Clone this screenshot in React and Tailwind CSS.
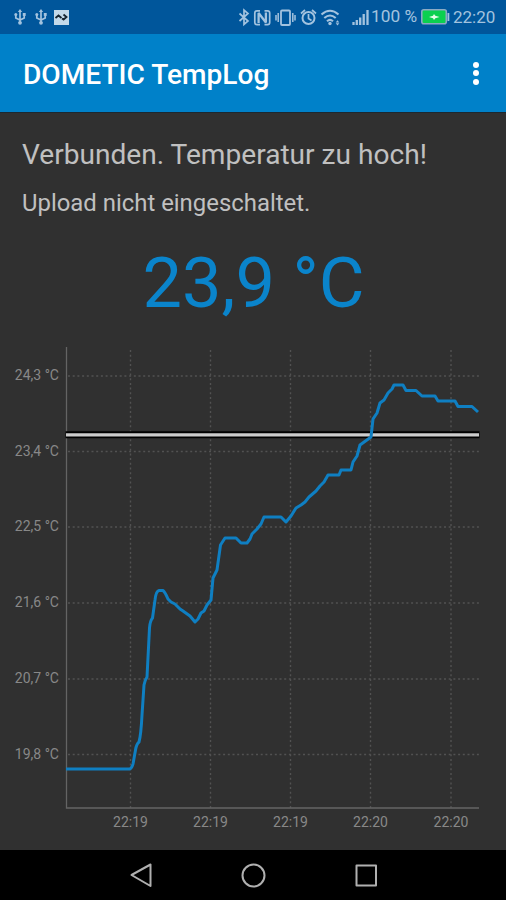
const Y_TICKS = [
  ["24,3 °C", 376], ["23,4 °C", 451.5], ["22,5 °C", 527], ["21,6 °C", 603], ["20,7 °C", 679], ["19,8 °C", 754.5],
];
const X_TICKS = [["22:19", 130.5], ["22:19", 210.5], ["22:19", 290.5], ["22:20", 370.5], ["22:20", 451]];

const CURVE =
  "M66 769H130Q132 768 133 764L135.5 750Q136.5 744 139 742Q141 735 142 715L144 685Q145 680 147 677L149.5 628Q150 621 152.5 618L155 600Q156 591 159 590.5H163Q165 592 168 599L171 602L175 604L180 609L183 611L190 616L195 622L198 619L201 613L204 611L207 605L211 600L213 578L217 570L220.500 545L225 538H236L241 543H247L250 539L252 534L257 529L261 524L264 517H281L286 522L291 516L296 508L301 505L305 502L309 497L316 491L320 486L324 482L328 475H339L341 470H351L353 462L357 456L360 445L371 437L373 419L377 413L380 403L384 400L388 393L392 389L394 385H403L406 390.500H416L422 396H435L438 401H455L458 406.500H472L478 412";

function Usb() {
  return (
    <svg className="h-4 w-3" viewBox="0 0 12 16" fill="none" stroke="#a3c3df" strokeWidth="1.700">
      <path d="M6 2v11M1.800 6v3L6 11l4.200-2V5.500" />
      <path d="M6 0L8.200 3H3.800Z" fill="#a3c3df" stroke="none" />
      <circle cx="6" cy="13.800" r="1.900" fill="#a3c3df" stroke="none" />
      <circle cx="1.800" cy="5.500" r="1.500" fill="#a3c3df" stroke="none" />
      <path d="M8.800 4h2.900v2.900H8.800Z" fill="#a3c3df" stroke="none" />
    </svg>
  );
}

function StatusIcons() {
  return (
    <svg className="h-[34px] w-[135px] shrink-0" viewBox="236 0 135 34" fill="none" stroke="#a3c3df" strokeWidth="1.500">
      <path d="M239.500 13.500L248 21L244 24.500V10L248 13.500L239.500 21" strokeWidth="1.700" />
      <path d="M260 10.800H257Q254.800 10.800 254.800 13V22.500Q254.800 24.700 257 24.700H260M264.500 10.800H267.500Q269.700 10.800 269.700 13V22.500Q269.700 24.700 267.500 24.700H264.500" strokeWidth="1.700" />
      <path d="M258.600 23V13L265.900 22.500V12.500" strokeWidth="2.300" strokeLinejoin="bevel" />
      <rect x="281" y="10.500" width="9" height="14.500" rx="1" strokeWidth="1.800" />
      <path d="M278.200 13v9M276 15v5.500M292.800 13v9M295 15v5.500" strokeWidth="1.500" />
      <circle cx="308.500" cy="18" r="6" strokeWidth="2" />
      <path d="M308.500 14v4.500l3 2M301 13.500L305 10M316 13.500L312 10" strokeWidth="1.700" />
      <path d="M321.500 14.500Q330 7 338.500 14.500M324.300 18Q330 13 335.700 18M327 21.300Q330 18.600 333 21.300" strokeWidth="2.100" />
      <circle cx="330" cy="23.500" r="1.700" fill="#a3c3df" stroke="none" />
      <path d="M335.700 22.500l1.800-2.200 1.800 2.200ZM335.700 23.300l1.800 2.200 1.800-2.200Z" fill="#a3c3df" stroke="none" />
      <path d="M353.500 22v3M356.800 20v5M360.200 17.500v7.500M363.700 14v11M367.500 10v15" strokeWidth="2.300" />
    </svg>
  );
}

function StatusBar() {
  return (
    <header className="flex h-[34px] items-center bg-[#00569b] text-[#a3c3df]">
      <div className="flex w-[236px] shrink-0 items-center pl-[14px]">
        <Usb />
        <span className="w-[9px]" />
        <Usb />
        <svg className="ml-[7px] h-[15px] w-[15px]" viewBox="0 0 15 15" fill="none">
          <rect width="15" height="15" fill="#c3d9e9" />
          <path d="M1.500 8L4.500 5.500L7.500 8M8 8.500L9.500 9.500M9.500 4.500L12.500 7L9 10" stroke="#16242e" strokeWidth="1.800" />
        </svg>
      </div>
      <StatusIcons />
      <span className="w-[50px] shrink-0 whitespace-nowrap text-[17.300px]">100 %</span>
      <svg className="h-[16px] w-[29px] shrink-0" viewBox="0 0 29 16">
        <rect x="0.800" y="0.800" width="24.500" height="14" rx="2" fill="#0bd04f" stroke="#8baac4" strokeWidth="1.600" />
        <rect x="26.500" y="4" width="1.800" height="8" fill="#a3c3df" />
        <path d="M8 8L12 6.800L13 5L14.300 6.800L18.500 8L14.300 9.200L13 11L12 9.200Z" fill="#e4ffe9" />
      </svg>
      <span className="ml-[3px] pt-[2px] text-[17px]">22:20</span>
    </header>
  );
}

function Chart() {
  return (
    <svg className="block h-[510px] w-full" viewBox="0 340 506 510" fill="none">
      <g stroke="#525252" strokeWidth="1.400" strokeDasharray="2 2.700">
        {Y_TICKS.map(([t, y]) => <path key={t} d={`M68 ${y}H479`} />)}
        {X_TICKS.map(([t, x]) => <path key={x} d={`M${x} 350V808`} />)}
      </g>
      <path d="M66.500 347V808H479" stroke="#646464" strokeWidth="1.300" />
      <path d="M65.500 434.800H479.500" stroke="#000" strokeWidth="7" />
      <path d="M66 434.800H479" stroke="#ccc" strokeWidth="3.200" />
      <path d={CURVE} stroke="#0f7fc2" strokeWidth="3" strokeLinejoin="round" />
      <g fill="#888" fontSize="14">
        {Y_TICKS.map(([t, y]) => <text key={t} x="59" y={y + 4.300} textAnchor="end">{t}</text>)}
        {X_TICKS.map(([t, x]) => <text key={x} x={x} y="826.500" textAnchor="middle">{t}</text>)}
      </g>
    </svg>
  );
}

function NavBar() {
  return (
    <nav className="flex h-[50px] items-center bg-black">
      <svg className="h-[50px] w-full" viewBox="0 850 506 50" fill="none" stroke="#b0b0b0" strokeWidth="2" strokeLinejoin="round">
        <path d="M131.500 875L150.500 864.500V886Z" />
        <circle cx="253.500" cy="875.500" r="11" />
        <rect x="356.500" y="865.500" width="19.500" height="20" />
      </svg>
    </nav>
  );
}

export default function App() {
  return (
    <div className="flex h-[900px] w-[506px] flex-col overflow-hidden bg-[#303030] font-[Roboto,sans-serif]">
      <StatusBar />
      <div className="flex h-[79px] items-center justify-between border-b border-[#1c2830] bg-[#0081c9] pl-[23px] pr-[27px]">
        <h1 className="pt-[5px] text-[28.100px] font-medium text-white">DOMETIC TempLog</h1>
        <div className="flex flex-col gap-[2.500px]">
          <i className="size-[6px] rounded-full bg-white" />
          <i className="size-[6px] rounded-full bg-white" />
          <i className="size-[6px] rounded-full bg-white" />
        </div>
      </div>
      <main className="h-[227px]">
        <p className="pl-[22px] pt-[22px] text-[28.100px] leading-[40px] text-[#c0c0c0]">Verbunden. Temperatur zu hoch!</p>
        <p className="pl-[22px] pt-[10px] text-[23.900px] leading-[36px] text-[#c0c0c0]">Upload nicht eingeschaltet.</p>
        <p className="pl-px pt-[22px] text-center text-[70.300px] leading-[80px] text-[#0a84cb]">23,9 °C</p>
      </main>
      <Chart />
      <NavBar />
    </div>
  );
}
